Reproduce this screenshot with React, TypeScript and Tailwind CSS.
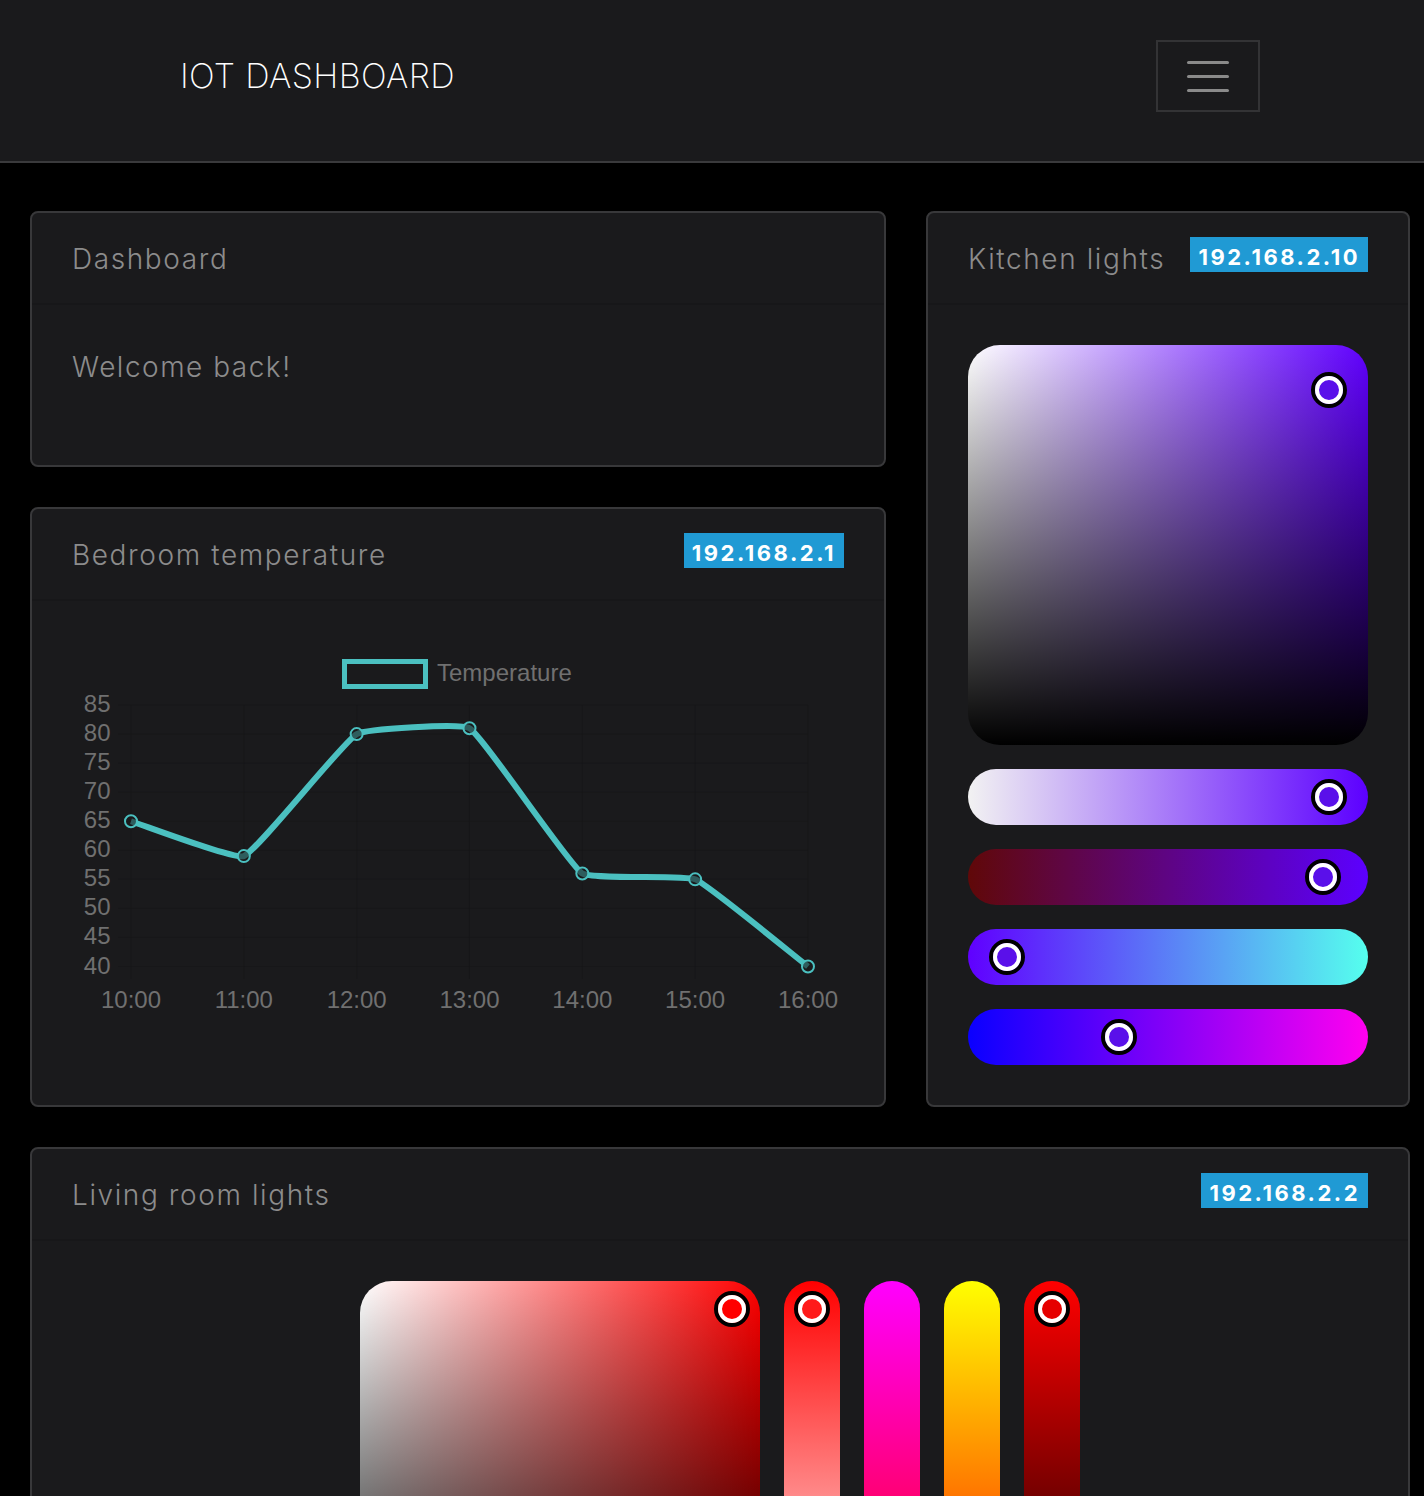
const temps = [65, 59, 80, 81, 56, 55, 40];
const hours = ['10:00', '11:00', '12:00', '13:00', '14:00', '15:00', '16:00'];
const ticks = [85, 80, 75, 70, 65, 60, 55, 50, 45, 40];

// chart coordinates, taken from the page so the ticks land where they should
const xAt = (i: number) => 131 + i * 112.83;
const yAt = (v: number) => 965.5 - (v - 40) * 5.81;

function linePath(tension: number) {
  const pts = temps.map((v, i) => [xAt(i), yAt(v)]);
  const ctrl = pts.map((p, i) => {
    const a = pts[i - 1] ?? p;
    const b = pts[i + 1] ?? p;
    const d1 = Math.hypot(p[0] - a[0], p[1] - a[1]);
    const d2 = Math.hypot(b[0] - p[0], b[1] - p[1]);
    const s = d1 + d2 || 1;
    return {
      before: [p[0] - (tension * d1 * (b[0] - a[0])) / s, p[1] - (tension * d1 * (b[1] - a[1])) / s],
      after: [p[0] + (tension * d2 * (b[0] - a[0])) / s, p[1] + (tension * d2 * (b[1] - a[1])) / s],
    };
  });
  let d = `M${pts[0][0]} ${pts[0][1]}`;
  for (let i = 1; i < pts.length; i++) {
    d += ` C${ctrl[i - 1].after[0]} ${ctrl[i - 1].after[1]} ${ctrl[i].before[0]} ${ctrl[i].before[1]} ${pts[i][0]} ${pts[i][1]}`;
  }
  return d;
}

function TempChart() {
  return (
    <svg viewBox="72 640 772 400" className="block w-[772px] h-[400px] font-['Liberation_Sans',sans-serif] text-[24px]">
      {/* legend */}
      <rect x="344.5" y="660.5" width="81" height="25" fill="none" stroke="#4bc0c0" strokeWidth="5" />
      <text x="437" y="680" fill="#707070">Temperature</text>

      {/* grid */}
      {ticks.map((t) => (
        <line key={t} x1="118" x2="808" y1={yAt(t)} y2={yAt(t)} stroke="#151517" strokeOpacity="0.55" strokeWidth="1" />
      ))}
      {hours.map((h, i) => (
        <line key={h} x1={xAt(i)} x2={xAt(i)} y1="704" y2="978" stroke="#151517" strokeOpacity="0.55" strokeWidth="1" />
      ))}

      {/* axis labels */}
      {ticks.map((t) => (
        <text key={t} x="110.5" y={yAt(t) + 7} textAnchor="end" fill="#707070">{t}</text>
      ))}
      {hours.map((h, i) => (
        <text key={h} x={xAt(i)} y="1007" textAnchor="middle" fill="#707070">{h}</text>
      ))}

      <path d={linePath(0.1)} fill="none" stroke="#4bc0c0" strokeWidth="6" />
      {temps.map((v, i) => (
        <circle key={i} cx={xAt(i)} cy={yAt(v)} r="6" fill="#1a1a1c" fillOpacity="0.6" stroke="#4bc0c0" strokeWidth="2" />
      ))}
    </svg>
  );
}

function Badge({ ip }: { ip: string }) {
  return (
    <span className="mt-6 h-[35px] px-2 pt-[5px] flex items-center bg-[#209ad4] text-white text-[22px] font-bold tracking-[2.5px] font-[Inter,sans-serif]">
      {ip}
    </span>
  );
}

function Card({ title, ip, className, children }: { title: string; ip?: string; className?: string; children: React.ReactNode }) {
  return (
    <section className={`border-2 border-[#38383a] rounded-lg bg-[#1a1a1c] overflow-hidden ${className ?? ''}`}>
      <div className="h-[92px] px-10 flex items-start justify-between border-b-2 border-[#171719]">
        <h2 className="mt-6 leading-[44px] text-[28px] font-light tracking-[1.6px] text-[#8c8c8c] font-[Inter,sans-serif]">{title}</h2>
        {ip && <Badge ip={ip} />}
      </div>
      <div className="p-10">{children}</div>
    </section>
  );
}

// picker handle: black ring, white ring, filled with the current colour
function Thumb({ x, y, fill }: { x: number; y: number; fill: string }) {
  return (
    <span
      className={`absolute w-9 h-9 -ml-[18px] -mt-[18px] rounded-full border-4 border-black ${fill}`}
      style={{ left: x, top: y }}
    >
      <span className="block w-full h-full rounded-full border-4 border-white" />
    </span>
  );
}

export default function App() {
  return (
    <div className="w-[1424px] h-[1496px] overflow-hidden bg-black">
      {/* Navbar */}
      <header className="h-[163px] pl-[180px] pr-[164px] pb-[9px] flex items-center justify-between bg-[#1a1a1c] border-b-2 border-[#3a3a3c]">
        <span className="mb-[2px] text-[34px] font-extralight tracking-[0.35px] text-white font-[Inter,sans-serif]">IOT DASHBOARD</span>
        <button className="w-[104px] h-[72px] flex flex-col items-center justify-center gap-[11px] border-2 border-[#333335]">
          <span className="block w-[42px] h-[3px] rounded-full bg-[#8a8a8a]" />
          <span className="block w-[42px] h-[3px] rounded-full bg-[#8a8a8a]" />
          <span className="block w-[42px] h-[3px] rounded-full bg-[#8a8a8a]" />
        </button>
      </header>

      <main className="pt-12 pl-[30px] grid grid-cols-[856px_484px] grid-rows-[256px_600px] gap-10">
        <Card title="Dashboard">
          <p className="leading-[44px] text-[28px] font-light tracking-[1.5px] text-[#8c8c8c] font-[Inter,sans-serif]">Welcome back!</p>
        </Card>

        {/* Kitchen lights */}
        <Card title="Kitchen lights" ip="192.168.2.10" className="row-span-2">
          <div className="relative flex flex-col gap-6">
            <div className="w-[400px] h-[400px] rounded-[32px] bg-[linear-gradient(to_bottom,transparent,#000),linear-gradient(to_right,#fff,#6000ff)]" />
            <div className="h-14 rounded-full bg-[linear-gradient(to_right,#f2f2f2,#5c00ff)]" />
            <div className="h-14 rounded-full bg-[linear-gradient(to_right,#600808,#5c00ff)]" />
            <div className="h-14 rounded-full bg-[linear-gradient(to_right,#6000ff,#55ffee)]" />
            <div className="h-14 rounded-full bg-[linear-gradient(to_right,#0a00ff,#ff00f0)]" />
            <Thumb x={361} y={45} fill="bg-[#5a10ea]" />
            <Thumb x={361} y={452} fill="bg-[#5a10ea]" />
            <Thumb x={355} y={532} fill="bg-[#5a10ea]" />
            <Thumb x={39} y={612} fill="bg-[#5a10ea]" />
            <Thumb x={150.5} y={692} fill="bg-[#5a10ea]" />
          </div>
        </Card>

        <Card title="Bedroom temperature" ip="192.168.2.1">
          <TempChart />
        </Card>

        {/* Living room lights, runs past the bottom of the page */}
        <Card title="Living room lights" ip="192.168.2.2" className="col-span-2">
          <div className="relative w-[720px] mx-auto flex gap-6">
            <div className="w-[400px] h-[400px] rounded-[32px] bg-[linear-gradient(to_bottom,transparent,#000),linear-gradient(to_right,#fff,#f00)]" />
            <div className="w-14 h-[400px] rounded-full bg-[linear-gradient(to_bottom,#f00,#fff)]" />
            <div className="w-14 h-[400px] rounded-full bg-[linear-gradient(to_bottom,#f0f,#f00)]" />
            <div className="w-14 h-[400px] rounded-full bg-[linear-gradient(to_bottom,#ff0,#f00)]" />
            <div className="w-14 h-[400px] rounded-full bg-[linear-gradient(to_bottom,#f00,#000)]" />
            <Thumb x={372} y={28} fill="bg-[#f00]" />
            <Thumb x={452} y={28} fill="bg-[#ff1a1a]" />
            <Thumb x={692} y={28} fill="bg-[#e60000]" />
          </div>
        </Card>
      </main>
    </div>
  );
}
